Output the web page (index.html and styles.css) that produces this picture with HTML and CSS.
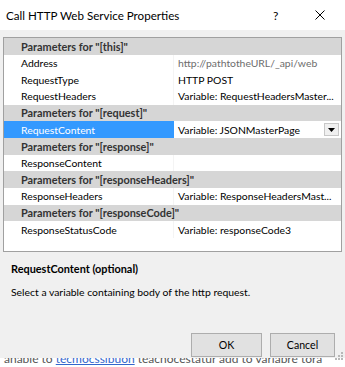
FILE: index.html
```html
<!DOCTYPE html>
<html>
<head>
<meta charset="utf-8">
<link rel="stylesheet" href="styles.css">
</head>
<body>
<div class="dialog">
  <div class="titlebar">
    <div class="title">Call HTTP Web Service Properties</div>
    <div class="help">?</div>
    <div class="close">
      <svg width="10" height="10" viewBox="0 0 10 10"><path d="M0.5 0.5 L9.5 9.5 M9.5 0.5 L0.5 9.5" stroke="#000" stroke-width="1" fill="none"/></svg>
    </div>
  </div>
  <div class="body">
    <div class="grid">
      <div class="row cat"><span class="name">Parameters for "[this]"</span></div>
      <div class="row"><span class="name">Address</span><span class="value muted">http://pathtotheURL/_api/web</span></div>
      <div class="row"><span class="name">RequestType</span><span class="value">HTTP POST</span></div>
      <div class="row"><span class="name">RequestHeaders</span><span class="value">Variable: RequestHeadersMaster...</span></div>
      <div class="row cat"><span class="name">Parameters for "[request]"</span></div>
      <div class="row sel"><span class="name">RequestContent</span><span class="value edit">Variable: JSONMasterPage<span class="drop"><svg width="7" height="4" viewBox="0 0 7 4"><path d="M0 0 H7 L3.5 4 Z" fill="#000"/></svg></span></span></div>
      <div class="row cat"><span class="name">Parameters for "[response]"</span></div>
      <div class="row"><span class="name">ResponseContent</span><span class="value"></span></div>
      <div class="row cat"><span class="name">Parameters for "[responseHeaders]"</span></div>
      <div class="row"><span class="name">ResponseHeaders</span><span class="value">Variable: ResponseHeadersMast...</span></div>
      <div class="row cat"><span class="name">Parameters for "[responseCode]"</span></div>
      <div class="row"><span class="name">ResponseStatusCode</span><span class="value">Variable: responseCode3</span></div>
    </div>
    <div class="desc">
      <div class="desc-title">RequestContent (optional)</div>
      <div class="desc-text">Select a variable containing body of the http request.</div>
    </div>
    <div class="buttons">
      <button class="btn ok">OK</button>
      <button class="btn cancel">Cancel</button>
    </div>
  </div>
  <svg class="grip" width="10" height="10" viewBox="0 0 10 10">
    <rect x="8" y="0" width="2" height="2" fill="#b8b8b8"/>
    <rect x="5" y="3" width="2" height="2" fill="#b8b8b8"/>
    <rect x="8" y="3" width="2" height="2" fill="#b8b8b8"/>
    <rect x="2" y="6" width="2" height="2" fill="#b8b8b8"/>
    <rect x="5" y="6" width="2" height="2" fill="#b8b8b8"/>
    <rect x="8" y="6" width="2" height="2" fill="#b8b8b8"/>
  </svg>
</div>
<div class="under"><span>anable to <u>tecmocssibuon</u> teacnocestatur add to variabre tora</span></div>
</body>
</html>
```
FILE: styles.css
```css
html, body {
  margin: 0;
  padding: 0;
}
body {
  width: 345px;
  height: 367px;
  overflow: hidden;
  background: #f0f0f0;
  font-family: "Lato", "Open Sans", sans-serif;
  font-size: 10.4px;
  color: #000;
}
.dialog {
  height: 358px;
  display: flex;
  flex-direction: column;
  position: relative;
  z-index: 1;
}
.grip {
  position: absolute;
  right: 2px;
  bottom: -4px;
}
.titlebar {
  height: 30px;
  background: #fff;
  display: flex;
  align-items: center;
  flex: none;
}
.title {
  padding-left: 6px;
  font-size: 11.6px;
  flex: 1;
}
.help {
  width: 10px;
  font-size: 12px;
  margin-right: 32px;
}
.close {
  width: 10px;
  height: 10px;
  margin-right: 20px;
  display: flex;
}
.body {
  flex: 1;
  display: flex;
  flex-direction: column;
  padding: 7px 3px 0 3px;
}
.grid {
  height: 213px;
  border: 1px solid #a0a0a0;
  background: #fff;
  flex: none;
}
.row {
  height: 16.667px;
  display: flex;
  align-items: center;
  white-space: nowrap;
  overflow: hidden;
}
.row .name {
  width: 152px;
  padding-left: 17px;
  flex: none;
  overflow: hidden;
}
.row .value {
  flex: 1;
  padding-left: 4px;
  border-left: 1px solid #f4f4f4;
  height: 100%;
  display: flex;
  align-items: center;
  overflow: hidden;
}
.cat {
  background: #d6d6d6;
  font-weight: bold;
  font-size: 10.9px;
  color: #333;
}
.cat .name {
  width: auto;
}
.muted {
  color: #6d6d6d;
}
.sel {
  background: #3399ff;
}
.sel .name {
  color: #fff;
}
.sel .value {
  background: #fff;
  border-left: 1px solid #3399ff;
  position: relative;
}
.drop {
  position: absolute;
  right: 2px;
  top: 2px;
  width: 15px;
  height: 13px;
  box-sizing: border-box;
  border: 1px solid #c8c8c8;
  background: #f0f0f0;
  display: flex;
  align-items: center;
  justify-content: center;
}
.desc {
  padding: 7px 0 0 8px;
}
.desc-title {
  font-weight: bold;
  font-size: 10.9px;
  height: 20px;
  line-height: 20px;
}
.desc-text {
  margin-top: 5px;
  line-height: 16px;
}
.buttons {
  margin-top: auto;
  display: flex;
  justify-content: flex-end;
  gap: 8px;
  padding-right: 7px;
  padding-bottom: 1px;
}
.btn {
  width: 71px;
  height: 24px;
  border: 1px solid #adadad;
  background: #e1e1e1;
  font-family: inherit;
  font-size: 10.6px;
  color: #000;
  padding: 0;
}
.btn.cancel {
  width: 65px;
}
.under {
  height: 9px;
  background: #fff;
  overflow: hidden;
  position: relative;
}
.under span {
  position: absolute;
  left: 4px;
  top: -7px;
  font-size: 12px;
  color: #555;
  white-space: nowrap;
}
.under u {
  color: #3366cc;
}
```
